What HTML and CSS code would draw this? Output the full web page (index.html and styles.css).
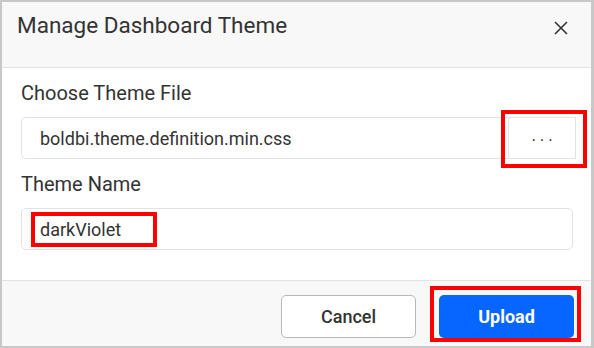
FILE: index.html
```html
<!DOCTYPE html>
<html lang="en">
<head>
  <meta charset="UTF-8" />
  <meta name="viewport" content="width=device-width, initial-scale=1.0" />
  <title>Manage Dashboard Theme</title>
  <link rel="stylesheet" href="styles.css">
</head>
<body>
  <div class="dialog">
    <div class="dialog-header">
      <h2 class="dialog-title">Manage Dashboard Theme</h2>
      <button class="close-btn" aria-label="Close">
        <svg width="14" height="14" viewBox="0 0 14 14">
          <path d="M1 1 L13 13 M13 1 L1 13" stroke="#333" stroke-width="1.6" fill="none" />
        </svg>
      </button>
    </div>

    <div class="dialog-body">
      <label class="field-label">Choose Theme File</label>
      <div class="file-group">
        <input class="text-input file-input" value="boldbi.theme.definition.min.css" readonly>
        <div class="browse-wrap">
          <button class="browse-btn">&middot;&middot;&middot;</button>
          <span class="mark mark-browse"></span>
        </div>
      </div>

      <label class="field-label">Theme Name</label>
      <div class="name-wrap">
        <input class="text-input name-input" value="darkViolet">
        <span class="mark mark-name"></span>
      </div>
    </div>

    <div class="dialog-footer">
      <button class="btn btn-cancel">Cancel</button>
      <div class="upload-wrap">
        <button class="btn btn-upload">Upload</button>
        <span class="mark mark-upload"></span>
      </div>
    </div>
  </div>
</body>
</html>
```

FILE: styles.css
```css
:root {
  --text-color: #333;
  --line-color: #e2e2e2;
  --panel-bg: #f8f8f8;
  --primary: #0766ff;
  --mark: #ff0000;
}

* {
  box-sizing: border-box;
}

body {
  margin: 0;
  font-family: Roboto, "Liberation Sans", sans-serif;
  color: var(--text-color);
  background: #fff;
}

.dialog {
  width: 594px;
  height: 348px;
  border: 2px solid #c8c8c8;
  border-right-width: 3px;
  display: flex;
  flex-direction: column;
  background: #fff;
}

.dialog-header {
  height: 66px;
  flex-shrink: 0;
  background: var(--panel-bg);
  border-bottom: 1px solid var(--line-color);
  display: flex;
  align-items: flex-start;
  justify-content: space-between;
  padding: 9px 23px 0 15px;
}

.dialog-title {
  margin: 0;
  font-size: 22.5px;
  line-height: 28px;
  font-weight: 400;
}

.close-btn {
  border: none;
  background: transparent;
  padding: 0;
  margin-top: 10px;
  width: 14px;
  height: 14px;
  display: flex;
  cursor: pointer;
}

.dialog-body {
  flex-grow: 1;
  padding: 13px 0 0 19px;
  display: flex;
  flex-direction: column;
}

.field-label {
  font-size: 20px;
  line-height: 24px;
  margin-bottom: 12px;
}

.text-input {
  height: 42px;
  border: 1px solid var(--line-color);
  border-radius: 5px;
  padding: 0 18px;
  font-family: inherit;
  font-size: 18px;
  color: var(--text-color);
  background: #fff;
  outline: none;
}

.file-group {
  display: flex;
  width: 555px;
  margin-bottom: 13px;
}

.file-input {
  flex-grow: 1;
  border-right: none;
  border-radius: 5px 0 0 5px;
}

.browse-wrap {
  position: relative;
}

.browse-btn {
  width: 68px;
  height: 42px;
  border: 1px solid var(--line-color);
  background: #fff;
  color: var(--text-color);
  font-size: 16px;
  letter-spacing: 3px;
  padding: 3px 0 0 3px;
  cursor: pointer;
}

.name-wrap {
  position: relative;
  width: 552px;
}

.name-input {
  width: 100%;
}

.dialog-footer {
  height: 66px;
  flex-shrink: 0;
  background: var(--panel-bg);
  border-top: 1px solid var(--line-color);
  display: flex;
  justify-content: flex-end;
  align-items: flex-start;
  gap: 23px;
  padding: 14px 17px 0 0;
}

.btn {
  width: 135px;
  height: 43px;
  border-radius: 5px;
  font-family: inherit;
  font-size: 18px;
  font-weight: 500;
  cursor: pointer;
}

.btn-cancel {
  background: #fff;
  border: 1px solid #b8b8b8;
  color: var(--text-color);
}

.btn-upload {
  background: var(--primary);
  border: none;
  color: #fff;
  font-weight: 700;
}

.upload-wrap {
  position: relative;
  display: flex;
}

/* red annotation boxes */
.mark {
  position: absolute;
  border: 4px solid var(--mark);
  pointer-events: none;
}

.mark-browse {
  top: -7px;
  left: -7px;
  right: -11px;
  bottom: -9px;
}

.mark-name {
  top: 4px;
  left: 10px;
  width: 126px;
  height: 35px;
}

.mark-upload {
  top: -9px;
  left: -9px;
  right: -7px;
  bottom: -4px;
}
```
